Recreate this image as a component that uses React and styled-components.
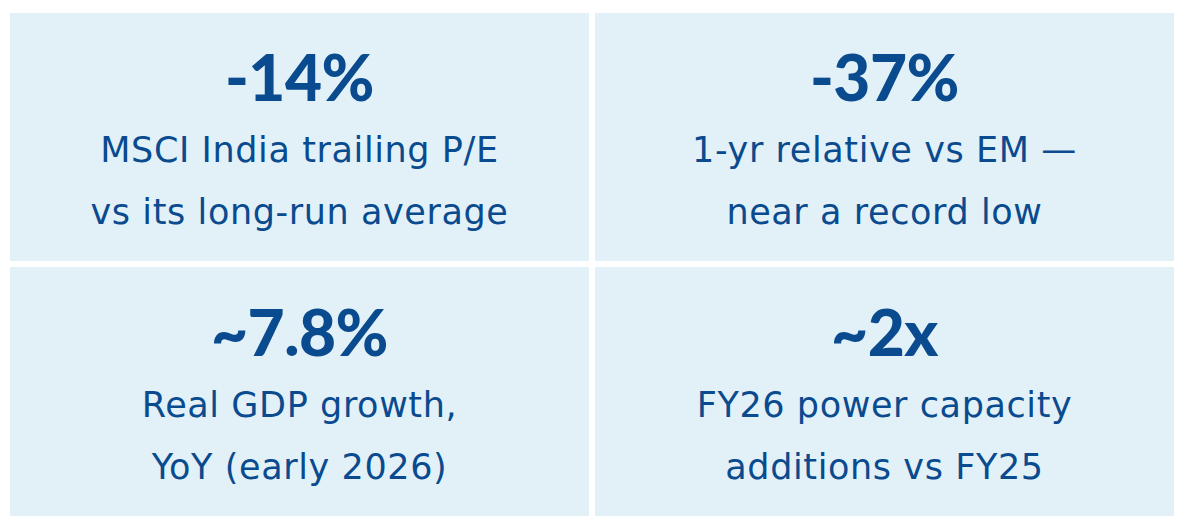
import React from 'react';
import styled, { createGlobalStyle } from 'styled-components';

const GlobalStyle = createGlobalStyle`
  html, body {
    margin: 0;
    padding: 0;
    background: #ffffff;
  }
  body {
    font-family: 'Lato', 'Open Sans', sans-serif;
  }
`;

const Grid = styled.div`
  display: grid;
  grid-template-columns: 579px 579px;
  grid-template-rows: 248px 249px;
  gap: 6px;
  padding: 13px 13px 13px 10px;
`;

const Card = styled.div`
  background: #e2f1f8;
  display: flex;
  flex-direction: column;
  align-items: center;
  justify-content: center;
  text-align: center;
  color: #0a4a8e;
  padding-top: 14px;
`;

const Figure = styled.div`
  font-family: 'Lato', sans-serif;
  font-size: 64px;
  font-weight: 900;
  line-height: 64px;
  letter-spacing: -0.5px;
`;

const Caption = styled.div`
  margin-top: 10px;
  font-family: 'DejaVu Sans', 'Open Sans', sans-serif;
  font-size: 35px;
  font-weight: 400;
  line-height: 62px;
  letter-spacing: 0.6px;
`;

const stats = [
  { value: '-14%', lines: ['MSCI India trailing P/E', 'vs its long-run average'] },
  { value: '-37%', lines: ['1-yr relative vs EM —', 'near a record low'] },
  { value: '~7.8%', lines: ['Real GDP growth,', 'YoY (early 2026)'] },
  { value: '~2x', lines: ['FY26 power capacity', 'additions vs FY25'] },
];

export default function App() {
  return (
    <>
      <GlobalStyle />
      <Grid>
        {stats.map(s => (
          <Card key={s.value}>
            <Figure>{s.value}</Figure>
            <Caption>
              {s.lines[0]}
              <br />
              {s.lines[1]}
            </Caption>
          </Card>
        ))}
      </Grid>
    </>
  );
}
